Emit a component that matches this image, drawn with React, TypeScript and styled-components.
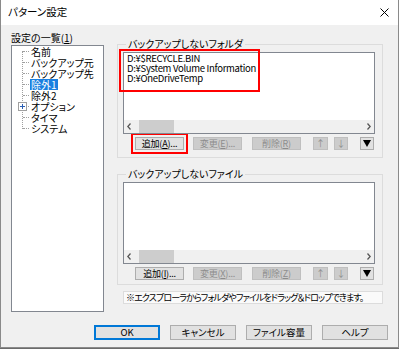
import styled, { createGlobalStyle } from 'styled-components';

const GlobalStyle = createGlobalStyle`
  html, body {
    margin: 0;
    padding: 0;
    background: #6b6b6b;
  }
  body {
    font-family: 'Noto Sans CJK JP', 'Liberation Sans', sans-serif;
    font-feature-settings: 'palt';
  }
`;

const Window = styled.div`
  width: 397px;
  height: 347px;
  border: 1px solid #8a8a8a;
  border-top: none;
  display: flex;
  flex-direction: column;
  background: #f0f0f0;
  color: #000;
  font-size: 10px;
  line-height: 1;
`;

const TitleBar = styled.div`
  height: 25px;
  flex: none;
  background: #fff;
  display: flex;
  align-items: center;
  justify-content: space-between;
  padding: 0 9px 0 7px;
  font-size: 10.5px;
`;

const Close = styled.svg`
  width: 9px;
  height: 9px;
`;

const Body = styled.div`
  flex: 1;
  display: flex;
  flex-direction: column;
  padding: 8px 10px 0 10px;
`;

const Main = styled.div`
  display: flex;
  gap: 13px;
`;

const LeftPane = styled.div`
  width: 93px;
  display: flex;
  flex-direction: column;
`;

const PaneLabel = styled.div`
  height: 12px;
  font-size: 10px;
`;

const TreeBox = styled.div`
  height: 267px;
  background: #fff;
  border: 1px solid #828790;
  box-sizing: border-box;
  position: relative;
  padding: 0;
`;

const TreeRail = styled.div`
  position: absolute;
  left: 10px;
  top: 5px;
  height: 78px;
  border-left: 1px dotted #a0a0a0;
`;

const TreeRow = styled.div`
  height: 11px;
  display: flex;
  align-items: center;
  position: relative;
  padding-left: 18px;
  font-size: 10px;
`;

const Twig = styled.span`
  position: absolute;
  left: 11px;
  top: 5px;
  width: 6px;
  border-top: 1px dotted #a0a0a0;
`;

const Expander = styled.span`
  position: absolute;
  left: 6px;
  top: 1px;
  width: 7px;
  height: 7px;
  border: 1px solid #a0a0a0;
  background: #fff;
  box-sizing: content-box;
  display: flex;
  align-items: center;
  justify-content: center;
  z-index: 1;
`;

const TreeText = styled.span<{ $selected?: boolean }>`
  padding: 0 1px;
  height: 11px;
  line-height: 11px;
  background: ${p => (p.$selected ? '#1a7fe0' : 'transparent')};
  color: ${p => (p.$selected ? '#fff' : '#000')};
  white-space: nowrap;
`;

const RightPane = styled.div`
  width: 266px;
  display: flex;
  flex-direction: column;
`;

const Group = styled.fieldset<{ $top: number; $height: number }>`
  margin: ${p => p.$top}px 0 0 0;
  padding: 0 7px 0 5px;
  height: ${p => p.$height}px;
  box-sizing: border-box;
  border: 1px solid #dcdcdc;
  min-width: 0;
`;

const Legend = styled.legend`
  font-size: 10px;
  padding: 0 2px;
  margin-left: 3px;
  height: 12px;
  line-height: 12px;
`;

const ListBox = styled.div`
  margin-top: 2px;
  height: 82px;
  background: #fff;
  border: 1px solid #828790;
  box-sizing: border-box;
  display: flex;
  flex-direction: column;
  position: relative;
`;

const ListItems = styled.div`
  flex: 1;
  padding: 0 0 0 3px;
  font-size: 9.5px;
  letter-spacing: -0.3px;
`;

const ListItem = styled.div`
  height: 10px;
  line-height: 10px;
  white-space: nowrap;
`;

const Mark = styled.div`
  position: absolute;
  left: -5px;
  top: -4px;
  width: 141px;
  height: 43px;
  border: 2px solid #ff0000;
  box-sizing: border-box;
`;

const HScroll = styled.div`
  height: 13px;
  background: #f0f0f0;
  display: flex;
  align-items: center;
  justify-content: space-between;
  padding: 0 3px;
  position: relative;
`;

const ScrollArrow = styled.svg`
  width: 4px;
  height: 7px;
`;

const Thumb = styled.div`
  position: absolute;
  left: 15px;
  top: 0;
  width: 35px;
  height: 13px;
  background: #cdcdcd;
`;

const ButtonRow = styled.div`
  display: flex;
  align-items: center;
  margin-top: 3px;
  padding-left: 12px;
`;

const SmallButton = styled.div<{
  $width: number;
  $gap?: number;
  $disabled?: boolean;
  $marked?: boolean;
}>`
  width: ${p => p.$width}px;
  height: 13px;
  margin-left: ${p => p.$gap ?? 0}px;
  box-sizing: border-box;
  border: 1px solid ${p => (p.$disabled ? '#bfbfbf' : '#adadad')};
  background: ${p => (p.$disabled ? '#cccccc' : '#e1e1e1')};
  color: ${p => (p.$disabled ? '#8c8c8c' : '#000')};
  display: flex;
  align-items: center;
  justify-content: center;
  font-size: 9px;
  letter-spacing: -0.2px;
  white-space: nowrap;
  outline: ${p => (p.$marked ? '2px solid #ff0000' : 'none')};
  outline-offset: 2px;
`;

const Hint = styled.div`
  margin: 6px 0 0 6px;
  height: 13px;
  box-sizing: border-box;
  border: 1px solid #dcdcdc;
  background: #fafafa;
  font-size: 9px;
  letter-spacing: -0.9px;
  display: flex;
  align-items: center;
  padding-left: 2px;
  white-space: nowrap;
  overflow: hidden;
`;

const Footer = styled.div`
  display: flex;
  justify-content: flex-end;
  gap: 10px;
  margin-top: 13px;
`;

const DialogButton = styled.div<{ $default?: boolean }>`
  width: 66px;
  height: 15px;
  box-sizing: border-box;
  border: 1px solid ${p => (p.$default ? '#0078d7' : '#adadad')};
  box-shadow: ${p => (p.$default ? 'inset 0 0 0 1px #0078d7' : 'none')};
  background: #e1e1e1;
  display: flex;
  align-items: center;
  justify-content: center;
  font-size: 9.5px;
`;

const tree = [
  { label: '名前' },
  { label: 'バックアップ元' },
  { label: 'バックアップ先' },
  { label: '除外1', selected: true },
  { label: '除外2' },
  { label: 'オプション', expandable: true },
  { label: 'タイマ' },
  { label: 'システム' },
];

const folders = ['D:¥$RECYCLE.BIN', 'D:¥System Volume Information', 'D:¥OneDriveTemp'];

function Scrollbar() {
  return (
    <HScroll>
      <Thumb />
      <ScrollArrow viewBox="0 0 4 7">
        <path d="M3.5 0.5L0.8 3.5L3.5 6.5" fill="none" stroke="#555" strokeWidth="1.3" />
      </ScrollArrow>
      <ScrollArrow viewBox="0 0 4 7">
        <path d="M0.5 0.5L3.2 3.5L0.5 6.5" fill="none" stroke="#555" strokeWidth="1.3" />
      </ScrollArrow>
    </HScroll>
  );
}

function Buttons({ keys, marked }: { keys: [string, string, string]; marked?: boolean }) {
  return (
    <ButtonRow>
      <SmallButton $width={49} $marked={marked}>
        追加(<u>{keys[0]}</u>)...
      </SmallButton>
      <SmallButton $width={49} $gap={9} $disabled>
        変更(<u>{keys[1]}</u>)...
      </SmallButton>
      <SmallButton $width={49} $gap={10} $disabled>
        削除(<u>{keys[2]}</u>)
      </SmallButton>
      <SmallButton $width={15} $gap={12} $disabled>↑</SmallButton>
      <SmallButton $width={14} $gap={6} $disabled>↓</SmallButton>
      <SmallButton $width={14} $gap={12}>
        <svg width="8" height="7" viewBox="0 0 8 7">
          <path d="M0 0H8L4 7Z" fill="#000" />
        </svg>
      </SmallButton>
    </ButtonRow>
  );
}

export default function App() {
  return (
    <>
      <GlobalStyle />
      <Window>
        <TitleBar>
          <span>パターン設定</span>
          <Close viewBox="0 0 9 9">
            <path d="M0.5 0.5L8.5 8.5M8.5 0.5L0.5 8.5" stroke="#000" strokeWidth="1" />
          </Close>
        </TitleBar>
        <Body>
          <Main>
            <LeftPane>
              <PaneLabel>
                設定の一覧(<u>1</u>)
              </PaneLabel>
              <TreeBox>
                <TreeRail />
                {tree.map(item => (
                  <TreeRow key={item.label}>
                    <Twig />
                    {item.expandable && (
                      <Expander>
                        <svg width="5" height="5" viewBox="0 0 5 5">
                          <path d="M0 2.5H5M2.5 0V5" stroke="#2b5fb4" strokeWidth="1" />
                        </svg>
                      </Expander>
                    )}
                    <TreeText $selected={item.selected}>{item.label}</TreeText>
                  </TreeRow>
                ))}
              </TreeBox>
            </LeftPane>
            <RightPane>
              <Group $top={5} $height={120}>
                <Legend>バックアップしないフォルダ</Legend>
                <ListBox>
                  <ListItems>
                    {folders.map(f => (
                      <ListItem key={f}>{f}</ListItem>
                    ))}
                  </ListItems>
                  <Mark />
                  <Scrollbar />
                </ListBox>
                <Buttons keys={['A', 'E', 'R']} marked />
              </Group>
              <Group $top={10} $height={117}>
                <Legend>バックアップしないファイル</Legend>
                <ListBox>
                  <ListItems />
                  <Scrollbar />
                </ListBox>
                <Buttons keys={['I', 'X', 'Z']} />
              </Group>
              <Hint>※エクスプローラからフォルダやファイルをドラッグ＆ドロップできます。</Hint>
            </RightPane>
          </Main>
          <Footer>
            <DialogButton $default>OK</DialogButton>
            <DialogButton>キャンセル</DialogButton>
            <DialogButton>ファイル容量</DialogButton>
            <DialogButton>ヘルプ</DialogButton>
          </Footer>
        </Body>
      </Window>
    </>
  );
}
